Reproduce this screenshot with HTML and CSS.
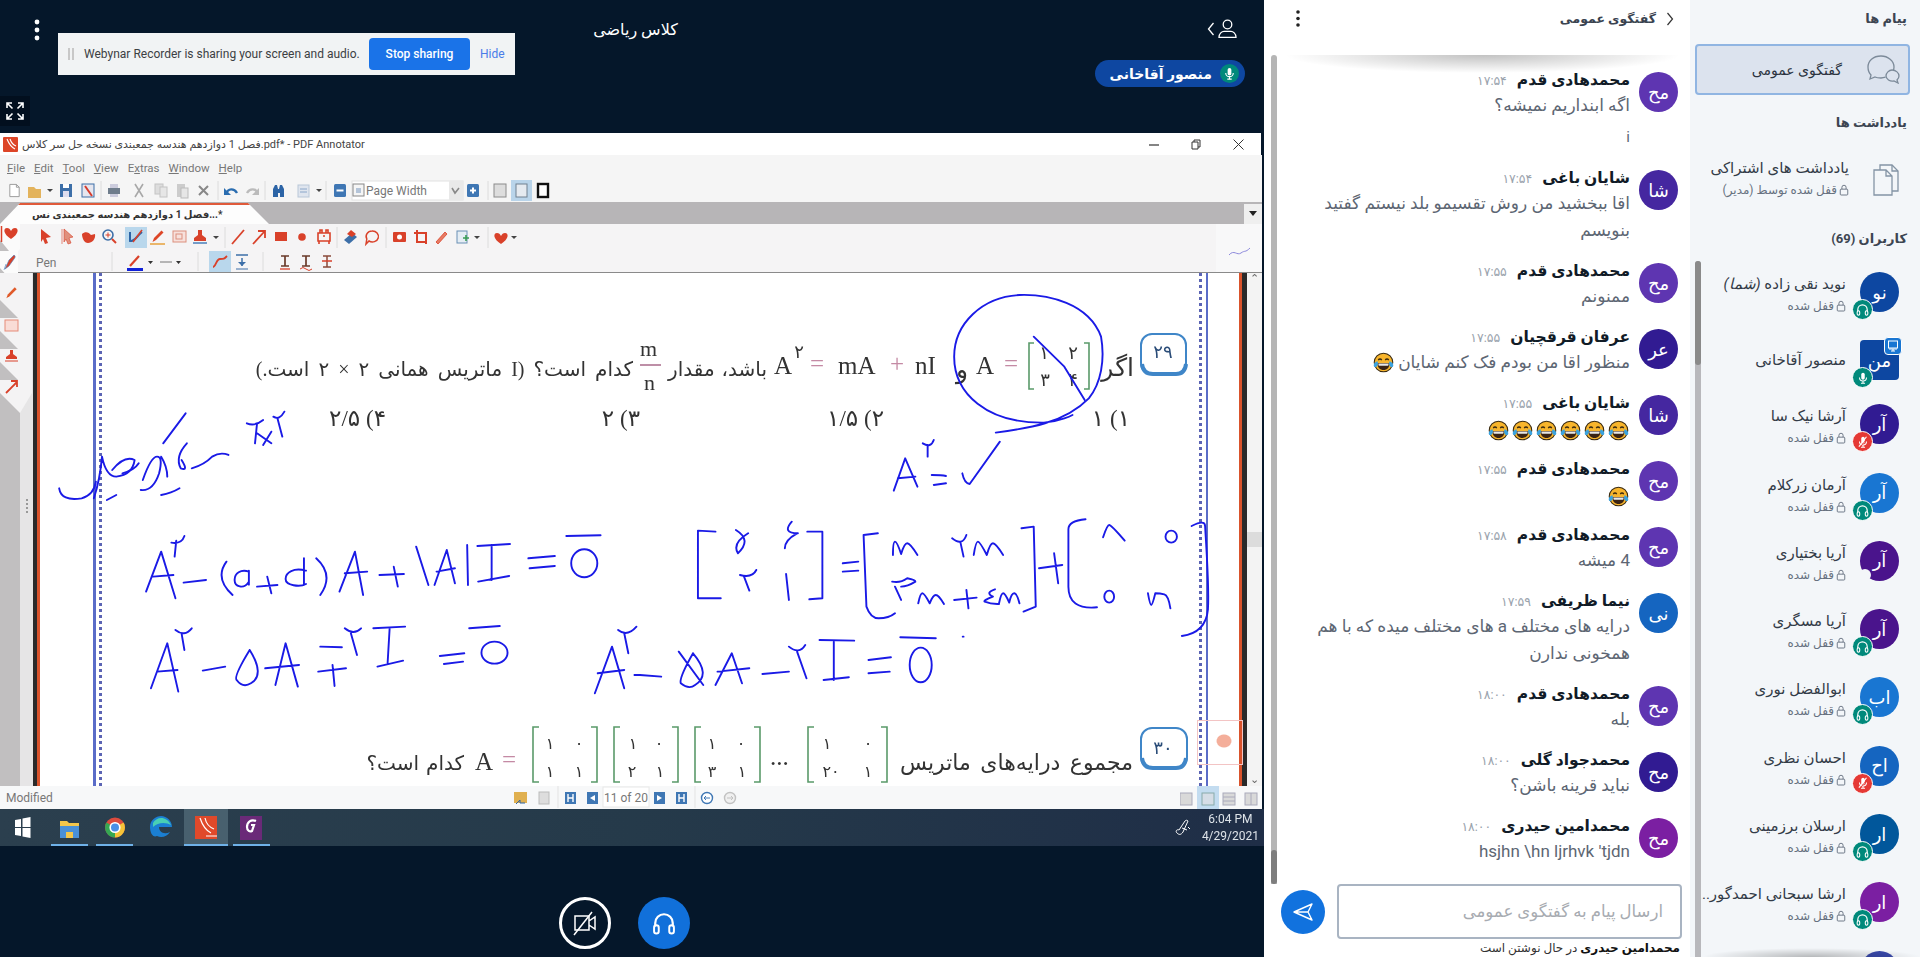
FILE: index.html
```html
<!DOCTYPE html>
<html lang="fa">
<head>
<meta charset="utf-8">
<title>کلاس ریاضی</title>
<link rel="stylesheet" href="styles.css">
</head>
<body>
<svg class="defs" width="0" height="0" aria-hidden="true">
  <symbol id="i-headset" viewBox="0 0 24 24"><path d="M4.500 15v-3a7.500 7.500 0 0 1 15 0v3" fill="none" stroke="currentColor" stroke-width="1.900"/><rect x="3.500" y="14" width="4" height="7" rx="2" fill="none" stroke="currentColor" stroke-width="1.700"/><rect x="16.500" y="14" width="4" height="7" rx="2" fill="none" stroke="currentColor" stroke-width="1.700"/></symbol>
  <symbol id="i-mic" viewBox="0 0 24 24"><rect x="9" y="3" width="6" height="12" rx="3" fill="currentColor"/><path d="M6 11a6 6 0 0 0 12 0M12 17v4M8.500 21h7" fill="none" stroke="currentColor" stroke-width="1.800"/></symbol>
  <symbol id="i-mute" viewBox="0 0 24 24"><rect x="9" y="3" width="6" height="12" rx="3" fill="currentColor"/><path d="M6 11a6 6 0 0 0 12 0M12 17v4M8.500 21h7" fill="none" stroke="currentColor" stroke-width="1.800"/><path d="M5 20 18 3" stroke="#fff" stroke-width="2"/><path d="M7 21 20 5" stroke="#e53935" stroke-width="1.400"/></symbol>
  <symbol id="i-lock" viewBox="0 0 12 14"><rect x="1.500" y="6" width="9" height="7" rx="1" fill="none" stroke="currentColor" stroke-width="1.100"/><path d="M3.500 6V3.800a2.500 2.500 0 0 1 5 0V6" fill="none" stroke="currentColor" stroke-width="1.100"/></symbol>
  <symbol id="i-emoji" viewBox="0 0 24 24"><circle cx="12" cy="12" r="10.600" fill="#f8b52c" stroke="#3a2a10" stroke-width="1.200"/><path d="M6 9.200c1-1.600 3-1.600 4 0M14 9.200c1-1.600 3-1.600 4 0" fill="none" stroke="#3a2a10" stroke-width="1.500"/><path d="M5 12.500h14c0 5-3 8-7 8s-7-3-7-8z" fill="#3a2415"/><path d="M6 13h12l-.6 2.600H6.600z" fill="#e8e8e8"/><path d="M.8 15c0-2 2.400-4 4.200-4.400 1.500 3-.1 6.600-2.200 6.600C1.600 17.200.8 16.400.8 15zM23.200 15c0-2-2.400-4-4.200-4.400-1.500 3 .1 6.600 2.200 6.600 1.200 0 2-.8 2-2.200z" fill="#3aa3e0"/></symbol>
  <symbol id="i-doc" viewBox="0 0 16 16"><path d="M3 1.500h7l3 3v10H3z" fill="#fff" stroke="currentColor"/><path d="M10 1.500v3h3" fill="none" stroke="currentColor"/></symbol>
  <symbol id="i-pen" viewBox="0 0 16 16"><path d="M2.500 14 4 10 11.500 2.500l2 2L6 12z" fill="currentColor"/></symbol>
</svg>

<main class="app">
  <section class="stage">
    <header class="stage-top">
      <svg class="kebab" width="6" height="22" viewBox="0 0 6 22"><circle cx="3" cy="3" r="2.400"/><circle cx="3" cy="11" r="2.400"/><circle cx="3" cy="19" r="2.400"/></svg>
      <h1 class="class-title">کلاس ریاضی</h1>
      <div class="user-toggle">
        <svg width="8" height="16" viewBox="0 0 8 16"><path d="M6.500 2 1.500 8l5 6" fill="none" stroke="#fff" stroke-width="1.300"/></svg>
        <svg width="19" height="19" viewBox="0 0 19 19"><circle cx="9.500" cy="5.500" r="4.300" fill="none" stroke="#fff" stroke-width="1.300"/><path d="M1 18.300c0-3.800 3-6 5-6h7c2 0 5 2.200 5 6z" fill="none" stroke="#fff" stroke-width="1.300"/></svg>
      </div>
    </header>
    <div class="talker-row">
      <div class="talker" dir="rtl">
        <span class="talker-mic"><svg width="15" height="15"><use href="#i-mic"/></svg></span>
        <span>منصور آقاخانی</span>
      </div>
    </div>
    <div class="fs-row">
      <button class="fs-btn" aria-label="fullscreen"><svg width="20" height="20" viewBox="0 0 20 20"><path d="M2 7V2h5M2 2l5.500 5.500M18 7V2h-5M18 2l-5.500 5.500M2 13v5h5M2 18l5.500-5.500M18 13v5h-5M18 18l-5.500-5.500" fill="none" stroke="#fff" stroke-width="1.600"/></svg></button>
    </div>

    <div class="share-bar">
      <span class="grip"></span>
      <span class="share-text">Webynar Recorder is sharing your screen and audio.</span>
      <button class="stop-btn">Stop sharing</button>
      <span class="hide-link">Hide</span>
    </div>

    <section class="shot">
      <div class="win-title">
        <svg width="15" height="15" viewBox="0 0 15 15"><rect width="15" height="15" rx="1" fill="#dd4527"/><path d="M4 2c2 5 4 8 8 10M7 2c1 3 3 6 6 7" stroke="#fff" stroke-width="1.100" fill="none"/></svg>
        <span class="win-name" dir="ltr">فصل 1 دوازدهم هندسه جمعبندی نسخه حل سر کلاس.pdf* - PDF Annotator</span>
        <div class="win-ctrls">
          <svg width="10" height="10" viewBox="0 0 10 10"><path d="M0 6h10" stroke="#333" stroke-width="1.200"/></svg>
          <svg width="10" height="11" viewBox="0 0 10 11"><path d="M1 3h6v7H1zM3 3V1h6v7H7" fill="none" stroke="#333"/></svg>
          <svg width="11" height="11" viewBox="0 0 11 11"><path d="M.5.5l10 10M10.500.5l-10 10" stroke="#333"/></svg>
        </div>
      </div>
      <nav class="win-menu">
        <span><u>F</u>ile</span><span><u>E</u>dit</span><span><u>T</u>ool</span><span><u>V</u>iew</span><span>E<u>x</u>tras</span><span><u>W</u>indow</span><span><u>H</u>elp</span>
      </nav>
      <svg class="tb" width="1264" height="22" viewBox="0 180 1264 22">
        <rect x="0" y="180" width="1262" height="22" fill="#f5f5f5"/>
        <g class="seps"><path d="M101 181v19M218 181v19M265 181v19M326 181v19M488 181v19"/></g>
        <use href="#i-doc" x="7" y="182" width="15" height="17" color="#999"/>
        <path d="M28 187h6l2 2h5v9H28z" fill="#e3b35c"/>
        <path d="M47 189h6l-3 3z" fill="#444"/>
        <rect x="60" y="184" width="12" height="13" fill="#3d6fa8"/><rect x="63" y="184" width="6" height="4" fill="#fff"/><rect x="63" y="191" width="6" height="6" fill="#dde"/>
        <rect x="82" y="184" width="12" height="13" fill="#e6e6ee" stroke="#3d6fa8"/><path d="M85 186l7 10" stroke="#d63b2b" stroke-width="2"/>
        <rect x="108" y="188" width="12" height="6" fill="#6f7d8c"/><rect x="110" y="184" width="8" height="4" fill="#ccd"/><rect x="110" y="194" width="8" height="3" fill="#ccd"/>
        <path d="M135 184l8 13M143 184l-8 13" stroke="#a8a8a8" stroke-width="1.600"/>
        <rect x="155" y="184" width="8" height="10" fill="#ddd" stroke="#c4c4c4"/><rect x="160" y="187" width="7" height="10" fill="#e6e6e6" stroke="#c4c4c4"/>
        <rect x="177" y="184" width="8" height="13" fill="#ccc"/><rect x="181" y="188" width="7" height="10" fill="#e6e6e6" stroke="#bbb"/>
        <path d="M199 186l9 9M208 186l-9 9" stroke="#888" stroke-width="2"/>
        <path d="M226 194c2-6 8-6 11-1" fill="none" stroke="#2a6db0" stroke-width="2.400"/><path d="M224 188v7h7z" fill="#2a6db0"/>
        <path d="M258 194c-2-6-8-6-11-1" fill="none" stroke="#bbb" stroke-width="2.400"/><path d="M259 188v7h-7z" fill="#bbb"/>
        <path d="M273 197v-8l2-4h2l1 4h1l1-4h2l2 4v8h-4v-4h-2v4z" fill="#2c64a6"/>
        <rect x="298" y="185" width="11" height="12" fill="#dfe5ee" stroke="#b9c7d8"/><path d="M300 189h7M300 192h7" stroke="#8aa6c9"/>
        <path d="M316 189h6l-3 3z" fill="#444"/>
        <rect x="334" y="184" width="12" height="13" rx="1.500" fill="#3f77b4"/><rect x="336.500" y="189.500" width="7" height="2" fill="#fff"/>
        <rect x="352" y="181" width="111" height="19" fill="#fff" stroke="#e2e2e2"/><rect x="449" y="181" width="14" height="19" fill="#e9e9e9"/>
        <path d="M452 188l3 5 4-5" stroke="#888" stroke-width="1.600" fill="none"/>
        <rect x="353" y="184" width="11" height="12" fill="#f5f5f5" stroke="#888"/><rect x="356" y="188" width="5" height="5" fill="#b4c4d8"/>
        <text class="tb-text" x="366" y="195">Page Width</text>
        <rect x="467" y="184" width="12" height="13" rx="1.500" fill="#3f77b4"/><path d="M470 190.500h6M473 187.500v6" stroke="#fff" stroke-width="2"/>
        <rect x="494" y="184" width="12" height="13" fill="#ddd" stroke="#8c8c8c"/>
        <rect x="511" y="180" width="21" height="21" fill="#b9d4ea"/><rect x="516" y="184" width="11" height="13" fill="#e5eaf0" stroke="#708090"/>
        <rect x="538" y="184" width="10" height="13" fill="#fff" stroke="#111" stroke-width="2.400"/>
      </svg>
      <div class="tab-band">
        <div class="doc-tab"><span dir="ltr">فصل 1 دوازدهم هندسه جمعبندی نس...*</span></div>
        <span class="tab-drop"></span>
      </div>
      <svg class="tb tools" width="1264" height="49" viewBox="0 224 1264 49">
        <rect x="0" y="224" width="1262" height="49" fill="#f5f4f5"/>
        <rect x="1216" y="224" width="46" height="48" fill="#f8f8f9"/>
        <path d="M0 272.500h1262" stroke="#8a8a8a"/>
        <path d="M0 224h20v25l-2 2v22H0z" fill="#fbfbfb"/>
        <path d="M0 240l9 11H0zM0 268l9 10H0z" fill="#c1bfc0"/>
        <path d="M1.500 226v16" stroke="#d9412a" stroke-width="1.500"/>
        <path d="M11 239c-8-5-8-11-4-11 2 0 3 1 4 3 1-2 2-3 4-3 4 0 4 6-4 11z" fill="#d9412a"/>
        <path d="M5 269l4-9 5-5c2 1 1 3 0 4l-5 7zM4 270l2-6" fill="#d9412a" stroke="#4a7fb8" stroke-width=".6"/>
        <rect x="125" y="227" width="22" height="21" fill="#b9d7ec"/>
        <rect x="209" y="251" width="22" height="21" fill="#b9d7ec"/>
        <g class="seps"><path d="M225 227v21M337 227v21M386 227v21M488 227v21M112 252v19M198 252v19M263 252v19"/></g>
        <g color="#dd4527">
          <path d="M41 229l10 8-5 1 2 5-3 1-2-5-2 3z" fill="#d9412a"/>
          <path d="M62 229v15M64 229l9 8-4 1 2 5-3 1-2-5-2 3z" fill="#e08f7c" stroke="#d9412a" stroke-width=".6"/>
          <path d="M82 234c3-3 7-2 9 1l4-1c1 5-3 9-7 9-4 0-6-5-6-9z" fill="#d9412a"/>
          <circle cx="108" cy="235" r="5" fill="none" stroke="#3d6fa8" stroke-width="1.600"/><path d="M112 239l4 4" stroke="#d9412a" stroke-width="2"/><path d="M105.500 235h5M108 232.500v5" stroke="#d9412a"/>
          <path d="M130 232v9c4 1 6-4 12-9" fill="none" stroke="#2c64a6" stroke-width="2"/><path d="M133 242l9-12" stroke="#d9412a" stroke-width="1.600"/>
          <use href="#i-pen" x="150" y="228" width="16" height="16"/><path d="M150 244h15" stroke="#e6a23c" stroke-width="1.500"/>
          <rect x="173" y="231" width="13" height="11" fill="#f7e1dc" stroke="#dc8f7e"/><rect x="176" y="234" width="6" height="5" fill="none" stroke="#dc8f7e"/>
          <path d="M198 230h4v5l4 3v3h-12v-3l4-3z" fill="#d9412a"/><path d="M193 243h14" stroke="#4a7fb8" stroke-width="1.500"/>
          <path d="M213 236h6l-3 3z" fill="#444"/>
          <path d="M232 244l12-14" stroke="#d9412a" stroke-width="1.800"/>
          <path d="M253 244l11-12M258 231h7v7" stroke="#d9412a" stroke-width="1.800" fill="none"/>
          <rect x="275" y="232" width="12" height="9" fill="#d9412a"/>
          <circle cx="302" cy="237" r="3.800" fill="#d9412a"/>
          <path d="M318 233h12v8h-12zM320 233v-3h2v3M326 233v-3h2v3M319 241v3M329 241v3M323 236h2" fill="none" stroke="#d9412a" stroke-width="1.600"/>
          <path d="M344 240l8-7 5 4-8 7z" fill="#3d6fa8"/><path d="M347 234l4-4 5 4-4 3z" fill="#d9412a"/>
          <path d="M372 231a6 5.500 0 1 1-3 10l-3 3 .8-5a6 5.500 0 0 1 5.200-8z" fill="none" stroke="#d9412a" stroke-width="1.500"/>
          <rect x="393" y="232" width="13" height="10" rx="1" fill="#d9412a"/><circle cx="399.500" cy="237" r="2.500" fill="#fff"/>
          <path d="M417 230v12h9M414 233h12v11" fill="none" stroke="#d9412a" stroke-width="2"/>
          <path d="M436 242l9-10 2 2-9 10z" fill="#e77c65" stroke="#d9412a" stroke-width=".8"/>
          <rect x="457" y="231" width="10" height="12" fill="#e5edf4" stroke="#6a8fb5"/><path d="M463 238h6M466 235v6" stroke="#3a9c56" stroke-width="1.600"/>
          <path d="M474 236h6l-3 3z" fill="#444"/>
          <path d="M501 244c-8-5-8-11-4-11 2 0 3 1 4 3 1-2 2-3 4-3 4 0 4 6-4 11z" fill="#d9412a"/>
          <path d="M511 236h6l-3 3z" fill="#444"/>
          <rect x="127" y="268" width="16" height="3" fill="#1020d8"/><path d="M130 266l9-10" stroke="#d9412a" stroke-width="2.200"/>
          <path d="M148 261h5l-2.500 3zM176 261h5l-2.500 3z" fill="#333"/><path d="M160 262h12" stroke="#777"/>
          <path d="M213 267c3 0 3-8 7-8s4 0 7-3" fill="none" stroke="#d9412a" stroke-width="1.800"/>
          <path d="M236 255h12M242 258v8" stroke="#3d6fa8" stroke-width="1.500"/><path d="M238 262h8l-4 4z" fill="#3d6fa8"/><path d="M236 269h12" stroke="#3d6fa8"/>
          <path d="M281 256h8M285 256v10M281 266h8" stroke="#6a3a2a" stroke-width="1.700"/><path d="M280 269h10" stroke="#d9412a" stroke-width="1.300"/>
          <path d="M302 256h8M306 256v10M302 266h8" stroke="#6a3a2a" stroke-width="1.700"/><path d="M300 269q3-3 6 0t6 0" stroke="#d9412a" fill="none"/>
          <path d="M323 256h8M327 256v11M323 267h8" stroke="#8a4a3a" stroke-width="1.500"/><path d="M322 261h10" stroke="#d9412a" stroke-width="1.500"/>
        </g>
        <text class="tb-text" x="36" y="267">Pen</text>
        <path d="M1229 255c5-6 8 1 12-2s4 0 9-5" fill="none" stroke="#8c88dc"/>
      </svg>

      <div class="page-row">
        <aside class="strip">
          <svg width="33" height="190" viewBox="0 273 33 190">
            <path d="M0 273h20l12 0v120l-12 20v50H0z" fill="#f4f3f4"/>
            <path d="M0 300l18 18H0zM0 331l18 18H0zM0 362l18 18H0zM0 393l20 20v50H0z" fill="#c1bfc0"/>
            <use href="#i-pen" x="4" y="285" width="15" height="15" color="#e05a2a"/>
            <rect x="5" y="320" width="13" height="11" fill="#f9dcd6" stroke="#e58b78"/>
            <path d="M10 350h3v4l4 3v2H6v-2l4-3z" fill="#d9412a"/><path d="M5 361h13" stroke="#d9412a"/>
            <path d="M6 393l11-11M11 381h6v6" stroke="#d9412a" stroke-width="1.800" fill="none"/>
          </svg>
          <span class="strip-grip"></span>
        </aside>
        <span class="rule-l"></span>
        <div class="paper">
          <span class="guide-l"></span>
          <span class="guide-r"></span>
          <span class="hand-box"></span>
        </div>
        <span class="rule-r"></span>
        <div class="vscroll">
          <span class="arrow">⌃</span>
          <span class="vthumb"></span>
          <span class="arrow">⌄</span>
        </div>
      </div>

      <div class="status">
        <span class="status-label">Modified</span>
        <svg class="status-nav" width="270" height="23" viewBox="510 786 270 23">
          <rect x="514" y="792" width="13" height="11" fill="#e0b050"/><path d="M516 804l4-4v3h5" stroke="#2c64a6" fill="none"/>
          <rect x="539" y="792" width="10" height="12" fill="#ddd" stroke="#bbb"/>
          <path d="M558 786v22M695 786v22" stroke="#e3e3e3"/>
          <rect x="565" y="792" width="11" height="12" fill="#3f77b4"/><path d="M568 794v8M573 794v8M568 798h5" stroke="#fff" stroke-width="1.400"/>
          <rect x="587" y="792" width="11" height="12" fill="#3f77b4"/><path d="M595 795v6l-5-3z" fill="#fff"/>
          <rect x="603" y="787" width="46" height="20" fill="#fff" stroke="#e8e8e8"/>
          <text class="tb-text" x="626" y="802" text-anchor="middle">11 of 20</text>
          <rect x="654" y="792" width="11" height="12" fill="#3f77b4"/><path d="M657 795v6l5-3z" fill="#fff"/>
          <rect x="676" y="792" width="11" height="12" fill="#3f77b4"/><path d="M679 794v8M684 794v8M679 798h5" stroke="#fff" stroke-width="1.400"/>
          <circle cx="707" cy="798" r="5.500" fill="#fff" stroke="#3f77b4" stroke-width="1.400"/><path d="M710 798h-6m2-2l-2 2 2 2" fill="none" stroke="#3f77b4"/>
          <circle cx="730" cy="798" r="5.500" fill="#f0f0f0" stroke="#c2c2c2" stroke-width="1.400"/><path d="M727 798h6m-2-2l2 2-2 2" fill="none" stroke="#c2c2c2"/>
        </svg>
        <svg class="status-views" width="78" height="23" viewBox="1180 786 78 23">
          <rect x="1197" y="786" width="22" height="23" fill="#c3dcf0"/>
          <rect x="1180" y="793" width="12" height="12" fill="#d9d9d9" stroke="#aab"/>
          <rect x="1202" y="793" width="12" height="12" fill="#d5dde6" stroke="#8aa"/>
          <rect x="1223" y="793" width="12" height="12" fill="#d9d9d9" stroke="#aab"/><path d="M1223 797h12M1223 801h12" stroke="#aab"/>
          <rect x="1245" y="793" width="12" height="12" fill="#d9d9d9" stroke="#aab"/><path d="M1251 793v12" stroke="#aab"/>
        </svg>
      </div>

      <div class="taskbar">
        <svg class="taskapps" width="280" height="37" viewBox="0 809 280 37">
          <path d="M15 820l6-1v8h-6zM22.500 818.500l8-1.500v10h-8zM15 828h6v8l-6-1zM22.500 828h8v10l-8-1.500z" fill="#fff"/>
          <rect x="184" y="809" width="44" height="37" fill="#48606e"/>
          <path d="M60 821h7l2 2h10v15H60z" fill="#f3c64a"/><rect x="60" y="826" width="19" height="12" fill="#4a90d6"/><rect x="66" y="832" width="7" height="6" fill="#f3c64a"/>
          <circle cx="115" cy="827.500" r="10" fill="#dd4b3e"/><path d="M115 827.500l-8.600-5a10 10 0 0 0 8.600 15z" fill="#35a853"/><path d="M115 827.500v10a10 10 0 0 0 8.600-15z" fill="#f6c338"/><circle cx="115" cy="827.500" r="4.800" fill="#4a8fe6" stroke="#fff" stroke-width="1.600"/>
          <path d="M150 827c0-7 6-11 11-11 6 0 11 5 11 11h-13c0 5 5 8 11 5-3 5-9 6-13 4-4 2-7-3-7-9z" fill="#1b7fd2"/><path d="M153 823c3-6 13-8 18 2-5-3-13-3-18 2z" fill="#49d0b4"/>
          <rect x="195" y="816" width="22" height="23" fill="#e0492a"/><path d="M200 818c2 6 5 12 11 15M205 818c1 5 4 9 9 11" stroke="#fff" stroke-width="1.200" fill="none"/><path d="M206 836h11" stroke="#fff"/>
          <rect x="240" y="816" width="22" height="24" fill="#6a2a78"/><path d="M256 821c-5-2-9 1-9 6 0 4 3 5 5 4l2-6h-3" fill="none" stroke="#fff" stroke-width="2.200"/>
          <g class="task-lines"><path d="M51 845h37M96 845h37M184 845h44M233 845h37"/></g>
        </svg>
        <div class="tray">
          <svg width="16" height="18" viewBox="0 0 16 18"><path d="M2 14c-2-2 0-4 2-3l6-9c1-1 2-1 3 0l-5 11c-2 3-4 3-6 1zM7 9l5 2M13 8l2 2" fill="none" stroke="#fff"/></svg>
          <div class="clock"><span>6:04 PM</span><span>4/29/2021</span></div>
        </div>
      </div>

      <svg class="canvas" width="1264" height="713" viewBox="0 133 1264 713">
        <!-- exam page text -->
        <g class="q-box"><rect x="1141" y="334" width="45" height="40" rx="11"/><path class="q-under" d="M1142 364q1 10 11 10h23q9 0 10-10"/><text class="q-num" x="1163" y="358">۲۹</text></g>
        <text class="ex" x="1134" y="376">اگر</text>
        <g class="mat"><path d="M1034 343h-5v46h5M1084 343h5v46h-5"/></g>
        <text class="ex dig" x="1044" y="359">۱</text><text class="ex dig" x="1073" y="359">۲</text>
        <text class="ex dig" x="1045" y="386">۳</text><text class="ex dig" x="1073" y="386">۴</text>
        <text class="lat end" x="994" y="374">A</text><text class="lat pink end" x="1018" y="372">=</text>
        <text class="ex" x="968" y="378">و</text>
        <text class="lat" x="915" y="374">nI</text><text class="lat pink" x="890" y="372">+</text>
        <text class="lat" x="838" y="374">mA</text><text class="lat pink" x="810" y="372">=</text>
        <text class="lat" x="774" y="374">A</text><text class="ex dig" x="799" y="358">۲</text>
        <text class="ex ex-m" x="767" y="376">باشد، مقدار</text>
        <text class="lat frac" x="640" y="356">m</text><path d="M640 365h21" stroke="#a86a8a" stroke-width="1.500"/><text class="lat frac" x="644" y="390">n</text>
        <text class="ex ex-l" x="633" y="376">کدام است؟ (I ماتریس همانی ۲ × ۲ است.)</text>
        <text class="ex ex-c" x="1130" y="426">۱) ۱</text>
        <text class="ex ex-c" x="884" y="426">۲) ۱/۵</text>
        <text class="ex ex-c" x="640" y="426">۳) ۲</text>
        <text class="ex ex-c" x="386" y="426">۴) ۲/۵</text>
        <g class="q-box"><rect x="1141" y="728" width="46" height="40" rx="11"/><path class="q-under" d="M1142 758q1 10 11 10h23q9 0 10-10"/><text class="q-num" x="1163" y="754">۳۰</text></g>
        <text class="ex ex-q" x="1133" y="770">مجموع درایه‌های ماتریس</text>
        <g class="mat">
          <path d="M814 727h-6v55h6M881 727h6v55h-6M701 727h-6v55h6M754 727h6v55h-6M620 727h-6v55h6M672 727h6v55h-6M539 727h-6v55h6M591 727h6v55h-6"/>
        </g>
        <text class="ex dig m30" x="827" y="749">۱</text><text class="ex dig m30" x="868" y="749">۰</text><text class="ex dig m30" x="831" y="777">۲۰</text><text class="ex dig m30" x="868" y="777">۱</text>
        <text class="ex dig m30" x="712" y="749">۱</text><text class="ex dig m30" x="741" y="749">۰</text><text class="ex dig m30" x="712" y="777">۳</text><text class="ex dig m30" x="742" y="777">۱</text>
        <text class="ex dig m30" x="633" y="749">۱</text><text class="ex dig m30" x="659" y="749">۰</text><text class="ex dig m30" x="632" y="777">۲</text><text class="ex dig m30" x="660" y="777">۱</text>
        <text class="ex dig m30" x="550" y="749">۱</text><text class="ex dig m30" x="579" y="749">۰</text><text class="ex dig m30" x="550" y="777">۱</text><text class="ex dig m30" x="579" y="777">۱</text>
        <text class="lat end" x="493" y="770">A</text><text class="lat pink end" x="516" y="768">=</text>
        <text class="lat" x="770" y="765">...</text>
        <text class="ex ex-m" x="464" y="770">کدام است؟</text>
        <!-- pen ink, left half -->
        <g class="ink" transform="translate(0 300) scale(.408 .3333)">
          <path d="M400 430 455 340"/>
          <path d="M605 370q20 10 40-10M630 370l-5 60M630 400l35 30M665 395l-20 40M670 350q15 12 27-15M680 355l12 55"/>
          <path d="M145 565q5 40 55 30q30-10 35-50M250 470q-5 70-20 125M250 470q10 60 35 60q40-5 45-50q-25-15-55 30M350 540q20-70 35-70t5 50q-15 55-45 50M458 430q-30 40-15 75q20 10 2-25M470 505q30-10 50-35q20-15 40-5M395 470q15 30 15 60"/>
          <path d="M262 600l23-15M395 585q25-5 45-20M300 520q30-10 40-30"/>
          <path d="M358 875 395 755 430 895M375 830 425 825M420 728q25 5 32-20M432 722 428 770M450 848 505 840"/>
          <path d="M555 785q-30 50 15 100M610 815c-20-8-35 5-35 25s22 30 35 5M610 812v42M630 860l50-5M655 830l10 50M750 812c-30-10-50 5-50 25s35 25 50 15M745 775v80M775 775q45 50 10 110"/>
          <path d="M832 875 870 755 890 885M845 820 900 815M930 825 990 822M965 800 975 860"/>
          <path d="M1020 740 1050 855M1065 855 1095 750 1115 850M1070 815 1115 805M1145 735 1147 855M1170 738 1250 732M1205 735 1205 840M1172 845 1248 828M1295 775 1360 768M1298 805 1360 798M1388 708 1472 706"/>
          <ellipse cx="1432" cy="790" rx="32" ry="42"/>
          <path d="M370 1165 410 1030 437 1175M385 1115 435 1110M430 990q22 22 40-5M445 1000 452 1050M497 1112 552 1100"/>
          <path d="M612 1050q-40 80-32 90q15 25 35 10q35-25-3-100M675 1155 700 1030 730 1160M650 1105 733 1095M785 1040 838 1042M780 1115 848 1105M815 1095 820 1158M845 985q22 22 40 0M860 1000 875 1065"/>
          <path d="M915 985 993 980M955 985 950 1090M925 1100 988 1082M1078 1068 1138 1060M1088 1092 1135 1085M1150 985 1225 978"/>
          <ellipse cx="1212" cy="1058" rx="32" ry="33"/>
          <path d="M1458 1180 1500 1040 1530 1165M1465 1120 1530 1110M1515 990q22 22 45-10M1530 1000 1540 1060M1555 1125 1568 1125"/>
        </g>
        <!-- pen ink, right half -->
        <g class="ink" transform="translate(640 300) scale(.408 .3333)">
          <path d="M0 1125 52 1130M130 1060q-35 75-30 90q20 20 35 5q40-30-5-95M95 1055 155 1155M185 1155 225 1060 250 1150M190 1115 268 1105M300 1122 365 1115M365 1040q25 25 40-5M385 1055 408 1135M440 1020 525 1022M475 1025 475 1140M450 1140 512 1132M560 1080 615 1072M560 1120 612 1115M638 1012 725 1015"/>
          <ellipse cx="688" cy="1095" rx="27" ry="52"/>
          <path d="M185 695 142 692 142 895 198 895M235 690q40 30 5 70q-15-30 25-60M372 665q-25 35 15 35M385 700q-30 20-30 45M410 695 447 695 447 895 415 898M245 825q30 10 40-15M255 830 268 872M358 822 365 900M497 790 535 785M497 815 535 812"/>
          <path d="M583 700 548 705 555 920q10 35 30 35q25 0 40-15"/>
          <path d="M620 765q0-40 5-40t15 37q8-32 15-32t25 35M765 715q25 25 35-10M785 725 793 770M818 765q5-40 10-40t22 40q8-35 15-35t25 35"/>
          <path d="M618 845q20 5 37-10q20 5 20 10q-20 15-35 15M625 860 640 900M682 910q5-30 10-30t18 30q8-25 15-25t20 27M770 900 825 893M800 870 805 925M870 868q-25 10-5 22q-25 12-20 15q15 8 35 7M880 910q5-30 10-30t15 28q5-28 12-28t13 30"/>
          <path d="M935 685 965 680 970 920 940 935M978 805 1035 795M1015 760 1025 850"/>
          <path d="M1092 658q-42 5-42 30V860q0 70 70 62M1135 712q10-37 15-37t38 47M1245 880q5 35 8 35t10-35q12 0 22 3t15 42M1352 678q33-20 33 0 10 190 7 250-5 70-64 80"/>
          <ellipse cx="1302" cy="710" rx="14" ry="18"/><ellipse cx="1150" cy="890" rx="12" ry="18"/>
          <path d="M791 1010h2"/>
          <path d="M622 572 650 475 680 560M632 535 675 530M693 430q20 15 27-10M705 435 705 470M715 525q25 0 35 3M720 555 750 550M790 520q5 30 18 32q35-60 74-127"/>
          <path d="M872 398C950 385 1040 370 1100 295C1130 250 1140 180 1130 110C1100 10 1000-18 930-15C840-10 770 70 770 170C770 280 850 370 990 368C1030 365 1060 345 1060 345"/>
          <path d="M965 110 1040 200 1090 300"/>
        </g>
      </svg>
    </section>

    <div class="controls">
      <button class="ctl ctl-off" aria-label="camera"><svg width="26" height="26" viewBox="0 0 26 26"><path d="M3 6h14v14H3zM17 11l6-4v12l-6-4" fill="none" stroke="#fff" stroke-width="1.500"/><path d="M2 25 20 2" stroke="#fff" stroke-width="1.500"/></svg></button>
      <button class="ctl ctl-on" aria-label="audio"><svg width="28" height="28"><use href="#i-headset"/></svg></button>
    </div>
  </section>

  <section class="chat" dir="rtl">
    <header class="chat-head">
      <svg width="8" height="14" viewBox="0 0 8 14"><path d="M1.500 1l5 6-5 6" fill="none" stroke="#333" stroke-width="1.200"/></svg>
      <h2>گفتگوی عمومی</h2>
      <svg class="chat-kebab" width="4" height="17" viewBox="0 0 4 17"><circle cx="2" cy="2" r="1.800"/><circle cx="2" cy="8.500" r="1.800"/><circle cx="2" cy="15" r="1.800"/></svg>
    </header>
    <div class="chat-body">
      <div class="chat-list">
        <span class="top-shade"></span>
        <article class="msg tall-first">
          <span class="av av-violet">مح</span>
          <div class="msg-main"><div class="who"><b>محمدهادی قدم</b><time>۱۷:۵۴</time></div><p>اگه ابنداریم نمیشه؟</p><p class="msg-extra">i</p></div>
        </article>
        <article class="msg">
          <span class="av av-indigo">شا</span>
          <div class="msg-main"><div class="who"><b>شایان باغی</b><time>۱۷:۵۴</time></div><p>اقا ببخشید من روش تقسیمو بلد نیستم گفتید<br>بنویسم</p></div>
        </article>
        <article class="msg">
          <span class="av av-violet">مح</span>
          <div class="msg-main"><div class="who"><b>محمدهادی قدم</b><time>۱۷:۵۵</time></div><p>ممنونم</p></div>
        </article>
        <article class="msg">
          <span class="av av-deep">عر</span>
          <div class="msg-main"><div class="who"><b>عرفان قرقچیان</b><time>۱۷:۵۵</time></div><p>منظور اقا من بودم فک کنم شایان <svg class="emo" width="21" height="21"><use href="#i-emoji"/></svg></p></div>
        </article>
        <article class="msg">
          <span class="av av-indigo">شا</span>
          <div class="msg-main"><div class="who"><b>شایان باغی</b><time>۱۷:۵۵</time></div><p class="emos"><svg class="emo" width="21" height="21"><use href="#i-emoji"/></svg><svg class="emo" width="21" height="21"><use href="#i-emoji"/></svg><svg class="emo" width="21" height="21"><use href="#i-emoji"/></svg><svg class="emo" width="21" height="21"><use href="#i-emoji"/></svg><svg class="emo" width="21" height="21"><use href="#i-emoji"/></svg><svg class="emo" width="21" height="21"><use href="#i-emoji"/></svg></p></div>
        </article>
        <article class="msg">
          <span class="av av-violet">مح</span>
          <div class="msg-main"><div class="who"><b>محمدهادی قدم</b><time>۱۷:۵۵</time></div><p class="emos"><svg class="emo" width="21" height="21"><use href="#i-emoji"/></svg></p></div>
        </article>
        <article class="msg">
          <span class="av av-violet">مح</span>
          <div class="msg-main"><div class="who"><b>محمدهادی قدم</b><time>۱۷:۵۸</time></div><p>4 میشه</p></div>
        </article>
        <article class="msg">
          <span class="av av-blue">نی</span>
          <div class="msg-main"><div class="who"><b>نیما ظریفی</b><time>۱۷:۵۹</time></div><p>درایه های مختلف a های مختلف میده که با هم<br>همخونی ندارن</p></div>
        </article>
        <article class="msg">
          <span class="av av-violet">مح</span>
          <div class="msg-main"><div class="who"><b>محمدهادی قدم</b><time>۱۸:۰۰</time></div><p>بله</p></div>
        </article>
        <article class="msg">
          <span class="av av-deep">مح</span>
          <div class="msg-main"><div class="who"><b>محمدجواد گلی</b><time>۱۸:۰۰</time></div><p>نباید قرینه باشن؟</p></div>
        </article>
        <article class="msg">
          <span class="av av-purple">مح</span>
          <div class="msg-main"><div class="who"><b>محمدامین حیدری</b><time>۱۸:۰۰</time></div><p class="latin-line">hsjhn \hn ljrhvk 'tjdn</p></div>
        </article>
      </div>
      <div class="chat-scroll"><span class="chat-thumb"></span></div>
    </div>
    <div class="composer">
      <div class="chat-input">ارسال پیام به گفتگوی عمومی</div>
      <button class="send" aria-label="send"><svg width="22" height="20" viewBox="0 0 22 20"><path d="M2 10 20 2l-4 8 4 8zM2 10h14" fill="none" stroke="#fff" stroke-width="1.400" stroke-linejoin="round"/></svg></button>
    </div>
    <div class="typing"><b>محمدامین حیدری</b> در حال نوشتن است</div>
  </section>

  <aside class="side" dir="rtl">
    <h3 class="side-h first">پیام ها</h3>
    <div class="pub-chat">
      <svg class="pub-ic" width="33" height="29" viewBox="0 0 33 29"><path d="M14 1C6 1 1 6 1 12c0 3 1 6 3 8l-1 4 5-2c2 1 4 1 6 1 1.500 0 3-.3 4.500-.8M27 12c0-6-6-11-13-11M27 12c0 1-.2 2-.5 3" fill="none" stroke="#7c8a99" stroke-width="1.300"/><path d="M25 15c4 0 7 3 7 6 0 2-1 3-2 4l1 3-4-2c-4 1-8-2-8-5 0-3 3-6 6-6z" fill="none" stroke="#7c8a99" stroke-width="1.300"/></svg>
      <span>گفتگوی عمومی</span>
    </div>
    <h3 class="side-h notes-h">یادداشت ها</h3>
    <div class="notes">
      <svg width="27" height="32" viewBox="0 0 27 32"><path d="M7 6V1h12l6 6v20h-6" fill="none" stroke="#8494a5" stroke-width="1.300"/><path d="M19 1v6h6M1 6h12l6 6v19H1zM13 6v6h6" fill="none" stroke="#8494a5" stroke-width="1.300"/></svg>
      <div class="notes-txt">
        <div class="u-name">یادداشت های اشتراکی</div>
        <div class="u-sub"><svg width="10" height="12"><use href="#i-lock"/></svg>قفل شده توسط (مدیر)</div>
      </div>
    </div>
    <h3 class="side-h users-h">کاربران (69)</h3>
    <div class="users">
      <ul class="user-list">
        <li class="user"><span class="av av-navy">نو<span class="badge b-ok"><svg width="15" height="15"><use href="#i-headset"/></svg></span></span><div><div class="u-name">نوید نقی زاده <i>(شما)</i></div><div class="u-sub"><svg width="10" height="12"><use href="#i-lock"/></svg>قفل شده</div></div></li>
        <li class="user user-mgr"><span class="av av-navy av-sq">من<span class="badge b-ok"><svg width="14" height="14"><use href="#i-mic"/></svg></span><span class="pres"><svg width="12" height="12" viewBox="0 0 12 12"><rect x="1.500" y="1" width="9" height="7" fill="none" stroke="#fff"/><path d="M2 9h8M6 9v2M4 11h4" stroke="#fff"/></svg></span></span><div><div class="u-name">منصور آقاخانی</div></div></li>
        <li class="user"><span class="av av-deep">آر<span class="badge b-off"><svg width="14" height="14"><use href="#i-mute"/></svg></span></span><div><div class="u-name">آرشا نیک سا</div><div class="u-sub"><svg width="10" height="12"><use href="#i-lock"/></svg>قفل شده</div></div></li>
        <li class="user"><span class="av av-sky">آر<span class="badge b-ok"><svg width="15" height="15"><use href="#i-headset"/></svg></span></span><div><div class="u-name">آرمان زرکلام</div><div class="u-sub"><svg width="10" height="12"><use href="#i-lock"/></svg>قفل شده</div></div></li>
        <li class="user"><span class="av av-grape">آر<span class="notch"></span></span><div><div class="u-name">آریا بختیاری</div><div class="u-sub"><svg width="10" height="12"><use href="#i-lock"/></svg>قفل شده</div></div></li>
        <li class="user"><span class="av av-grape">آر<span class="badge b-ok"><svg width="15" height="15"><use href="#i-headset"/></svg></span></span><div><div class="u-name">آریا مسگری</div><div class="u-sub"><svg width="10" height="12"><use href="#i-lock"/></svg>قفل شده</div></div></li>
        <li class="user"><span class="av av-sky">اب<span class="badge b-ok"><svg width="15" height="15"><use href="#i-headset"/></svg></span></span><div><div class="u-name">ابوالفضل نوری</div><div class="u-sub"><svg width="10" height="12"><use href="#i-lock"/></svg>قفل شده</div></div></li>
        <li class="user"><span class="av av-blue">اح<span class="badge b-off"><svg width="14" height="14"><use href="#i-mute"/></svg></span></span><div><div class="u-name">احسان نظری</div><div class="u-sub"><svg width="10" height="12"><use href="#i-lock"/></svg>قفل شده</div></div></li>
        <li class="user"><span class="av av-ocean">ار<span class="badge b-ok"><svg width="15" height="15"><use href="#i-headset"/></svg></span></span><div><div class="u-name">ارسلان برزمینی</div><div class="u-sub"><svg width="10" height="12"><use href="#i-lock"/></svg>قفل شده</div></div></li>
        <li class="user"><span class="av av-purple">ار<span class="badge b-ok"><svg width="15" height="15"><use href="#i-headset"/></svg></span></span><div><div class="u-name">ارشا سبحانی احمدگور...</div><div class="u-sub"><svg width="10" height="12"><use href="#i-lock"/></svg>قفل شده</div></div></li>
        <li class="user"><span class="av av-royal"></span></li>
      </ul>
      <div class="side-scroll"><span class="side-thumb"></span></div>
      <span class="bottom-shade"></span>
    </div>
  </aside>
</main>
</body>
</html>
```

FILE: styles.css
```css
* { box-sizing: border-box; }
html, body { margin: 0; height: 100%; overflow: hidden; }
body { font-family: Roboto, "DejaVu Sans", sans-serif; background: #fff; }
.defs { position: absolute; }
.app { display: flex; width: 1920px; height: 957px; overflow: hidden; }
h1, h2, h3, p, ul { margin: 0; padding: 0; }
button { border: 0; padding: 0; font: inherit; }

/* Stage */
.stage { position: relative; width: 1264px; height: 957px; background: #05172a; color: #fff; display: flex; flex-direction: column; flex: none; }
.stage-top { height: 60px; display: grid; grid-template-columns: 1fr auto 1fr; align-items: start; padding: 19px 27px 0 34px; }
.kebab { fill: #fff; }
.class-title { font-size: 16px; font-weight: 400; line-height: 22px; }
.user-toggle { justify-self: end; display: flex; gap: 3px; align-items: center; }
.talker-row { height: 36px; display: flex; justify-content: flex-end; padding-right: 19px; }
.talker { height: 27px; width: 150px; border-radius: 14px; background: #0e47a1; display: flex; align-items: center; gap: 8px; padding-right: 6px; font-size: 14px; font-weight: 700; }
.talker-mic { width: 19px; height: 19px; border-radius: 50%; background: #00897b; display: grid; place-items: center; color: #fff; }
.fs-row { height: 37px; }
.fs-btn { width: 30px; height: 30px; background: #020f1e; display: grid; place-items: center; }

.share-bar { position: absolute; left: 58px; top: 33px; width: 457px; height: 42px; background: #f1f3f4; display: flex; align-items: center; color: #3c4043; font: 12px Roboto, sans-serif; }
.grip { width: 6px; height: 12px; margin: 0 10px; border-left: 2px solid #c8c8c8; border-right: 2px solid #c8c8c8; }
.share-text { width: 286px; white-space: nowrap; }
.stop-btn { width: 101px; height: 32px; background: #1a73e8; color: #fff; border-radius: 4px; font-weight: 500; font-size: 12px; margin-left: -1px; }
.hide-link { color: #4a7ce8; margin-left: 10px; }

/* Captured window */
.shot { position: relative; width: 1264px; height: 713px; flex: none; display: flex; flex-direction: column; filter: blur(.35px); color: #333; }
.win-title { width: 1261px; height: 22px; background: #fff; display: flex; align-items: center; padding-left: 3px; gap: 4px; font-size: 12px; }
.win-name { font-size: 11px; color: #444; white-space: nowrap; }
.win-ctrls { margin-left: auto; display: flex; align-items: center; gap: 32px; padding-right: 17px; }
.win-menu { height: 25px; background: #f5f5f5; display: flex; align-items: center; width: 1262px; padding-left: 7px; gap: 9px; font-size: 11.500px; color: #777; }
.tb { display: block; flex: none; }
.seps path { stroke: #dcdcdc; fill: none; }
.tb-text { font: 12px Roboto, sans-serif; fill: #777; }
.tab-band { height: 22px; width: 1262px; background: #b7b5b7; display: flex; justify-content: space-between; align-items: flex-end; }
.doc-tab { width: 269px; height: 21px; padding-left: 32px; background: #fdfdfd; border-top: 2px solid #e05a3a; clip-path: polygon(20px 0, 248px 0, 100% 100%, 0 100%); font-size: 10px; font-weight: 700; color: #333; display: flex; align-items: center; white-space: nowrap; }
.tab-drop { width: 18px; height: 20px; background: #efefef; position: relative; }
.tab-drop::after { content: ""; position: absolute; left: 5px; top: 7px; border: 4px solid transparent; border-top: 5px solid #222; }
.page-row { height: 513px; width: 1262px; display: flex; }
.strip { width: 33px; background: linear-gradient(to right, #c1bfc0 20px, #e6e5e6 20px); position: relative; display: flex; flex-direction: column; }
.strip-grip { position: absolute; left: 26px; top: 226px; height: 14px; border-left: 2px dotted #999; }
.rule-l { width: 7px; background: linear-gradient(to right, #2a2a2a 4px, #d9532c 4px); }
.rule-r { width: 8px; background: linear-gradient(to right, #d9532c 3px, #2a2a2a 3px); }
.paper { flex: 1; background: #fff; position: relative; }
.guide-l { position: absolute; left: 53px; top: 0; bottom: 0; width: 9px; border-left: 3px solid #5a6cc8; }
.guide-l::after { content: ""; position: absolute; left: 3px; top: 0; bottom: 0; border-left: 3px dotted #5b64b4; }
.guide-r { position: absolute; left: 1159px; top: 0; bottom: 0; width: 9px; border-right: 2px solid #5a6cc8; border-left: 3px dotted #5b64b4; }
.hand-box { position: absolute; left: 1157px; top: 447px; width: 46px; height: 45px; border: 1px solid #f3c4c4; background: radial-gradient(ellipse 8px 7px at 26px 20px, #f4ae9a 85%, rgba(255,255,255,0) 100%); }
.vscroll { width: 15px; background: #f3f3f3; display: flex; flex-direction: column; align-items: center; justify-content: space-between; color: #666; font-size: 11px; line-height: 12px; position: relative; }
.vthumb { position: absolute; top: 259px; left: 0; width: 15px; height: 15px; background: #dcdcdc; }
.status { height: 23px; width: 1262px; background: #f7f8f9; display: flex; align-items: center; font-size: 12px; color: #777; padding-left: 6px; }
.status-label { width: 504px; }
.status-views { margin-left: auto; margin-right: 4px; }
.taskbar { height: 37px; width: 1264px; background: linear-gradient(to right, #2b3f4e, #253a4a 50%, #1f2e47); display: flex; justify-content: space-between; align-items: center; }
.task-lines path { stroke: #6fb1e8; stroke-width: 2; fill: none; }
.tray { display: flex; align-items: center; gap: 11px; padding-right: 5px; }
.clock { display: flex; flex-direction: column; align-items: center; font-size: 12px; line-height: 17px; color: #dde3e8; }
.canvas { position: absolute; left: 0; top: 0; pointer-events: none; }
.ex { font-family: "Liberation Serif", "DejaVu Sans", serif; font-size: 25px; fill: #333; text-anchor: start; direction: rtl; }
.ex-l { font-size: 20px; word-spacing: 4px; }
.ex-q { font-size: 22px; word-spacing: 4px; }
.ex-m { word-spacing: 2px; font-size: 20px; }
.ex-c { font-size: 23px; }
.dig { text-anchor: middle; font-size: 18px; direction: ltr; }
.m30 { font-size: 16px; }
.lat { font-family: "Liberation Serif", serif; font-size: 25px; fill: #333; }
.lat.end { text-anchor: end; }
.pink { fill: #c48aa4; }
.frac { font-size: 22px; }
.q-box rect { fill: #fff; stroke: #3f86c8; stroke-width: 2; }
.q-under { fill: none; stroke: #3f86c8; stroke-width: 4; }
.q-num { font-size: 18px; fill: #2a4c78; text-anchor: middle; font-family: "DejaVu Sans", sans-serif; }
.mat path { fill: none; stroke: #5a9a6a; stroke-width: 1.600; }
.ink path, .ink ellipse { fill: none; stroke: #1a1ae6; stroke-width: 1.900; vector-effect: non-scaling-stroke; stroke-linecap: round; stroke-linejoin: round; }
.controls { flex: 1; display: flex; justify-content: center; gap: 27px; padding: 51px 15px 0 0; }
.ctl { width: 52px; height: 52px; border-radius: 50%; display: grid; place-items: center; color: #fff; }
.ctl-off { background: transparent; border: 3px solid #fff; }
.ctl-on { background: #1170da; }

/* Shared avatar */
.av { flex: none; width: 39px; height: 40px; border-radius: 50%; color: #fff; display: grid; place-items: center; font-size: 18px; position: relative; }
.av-violet { background: #5e35b1; }
.av-indigo { background: #4527a0; }
.av-deep { background: #311b92; }
.av-blue { background: #1565c0; }
.av-purple { background: #7b1fa2; }
.av-navy { background: #0d47a1; }
.av-sky { background: #1976d2; }
.av-grape { background: #4a148c; }
.av-ocean { background: #01579b; }
.av-royal { background: #3949ab; }
.av-sq { border-radius: 4px; }

/* Chat */
.chat { width: 426px; flex: none; height: 957px; background: #fff; display: flex; flex-direction: column; }
.chat-head { height: 55px; display: flex; align-items: center; gap: 10px; padding: 0 16px 18px 0; }
.chat-head h2 { font-size: 12.500px; font-weight: 700; color: #3a4350; }
.chat-kebab { margin-right: auto; margin-left: 32px; fill: #222; }
.chat-body { height: 829px; display: flex; }
.chat-list { flex: 1; padding: 17px 12px 0 0; overflow: hidden; position: relative; }
.top-shade { position: absolute; left: 8px; right: 10px; top: 0; height: 18px; background: radial-gradient(ellipse 50% 100% at 50% 0, rgba(0,0,0,.24), rgba(0,0,0,0)); }
.msg { display: flex; gap: 9px; padding-bottom: 19px; }
.msg-main { flex: 1; color: #5d6673; font-size: 17px; line-height: 27px; }
.who { display: flex; align-items: center; gap: 10px; height: 16px; margin-bottom: 4px; }
.who b { color: #111b27; font-size: 15.500px; }
.who time { font-size: 12.500px; color: #9aa3ad; }
.msg p { white-space: nowrap; }
.msg.tall-first { padding-bottom: 14px; }
.msg-extra { line-height: 37px; font-size: 15px; }
.latin-line { font-size: 17px; }
.emo { vertical-align: -5px; }
.emos { display: flex; gap: 3px; padding-top: 3px; height: 27px; align-items: center; padding-right: 1px; }
.chat-scroll { width: 6px; margin-left: 7px; background: #b5b5b5; border-radius: 4px 4px 0 0; display: flex; flex-direction: column; justify-content: flex-end; }
.chat-thumb { height: 34px; border-radius: 3px; background: #7e7e7e; }
.composer { height: 55px; display: flex; align-items: center; padding: 0 8px 0 17px; }
.chat-input { flex: 1; height: 55px; border: 2px solid #a9b4c2; border-radius: 4px; padding-right: 17px; display: flex; align-items: center; color: #a7abb1; font-size: 16.500px; }
.send { width: 44px; height: 44px; border-radius: 50%; background: #1172de; margin-right: 12px; display: grid; place-items: center; }
.typing { padding-right: 10px; font-size: 12px; line-height: 18px; color: #333; }
.typing b { color: #111; }

/* Side */
.side { width: 230px; flex: none; height: 957px; background: #f3f6f9; display: flex; flex-direction: column; color: #2b3340; }
.side-h { font-size: 13px; font-weight: 700; color: #3c4552; padding-right: 13px; line-height: 20px; }
.side-h.first { padding-top: 9px; }
.pub-chat { height: 51px; margin: 15px 10px 0 5px; border: 2px solid #90b5e2; border-radius: 4px; background: #dce3ee; display: flex; align-items: center; gap: 25px; padding-right: 8px; font-size: 14px; }
.side-h.notes-h { margin-top: 18px; }
.notes { height: 76px; margin-top: 6px; display: flex; align-items: flex-start; padding: 17px 20px 0 0; gap: 24px; }
.notes > svg { margin-top: 8px; }
.u-name { font-size: 15px; line-height: 24px; color: #333c48; white-space: nowrap; }
.u-name i { font-style: italic; }
.u-sub { font-size: 12px; line-height: 20px; color: #667180; display: flex; align-items: center; gap: 2px; white-space: nowrap; }
.side-h.users-h { margin-top: 14px; margin-bottom: 12px; }
.users { flex: 1; position: relative; display: flex; overflow: hidden; min-height: 0; }
.user-list { flex: 1; list-style: none; padding: 11px 0 0 0; order: 1; min-width: 0; }
.user { height: 68.300px; display: flex; gap: 14px; padding-right: 21px; margin-left: 6px; }
.user-mgr { height: 64px; align-items: flex-start; }
.user-mgr .u-name { line-height: 40px; }
.user > div { min-width: 0; }
.badge { position: absolute; left: -8px; bottom: -8px; width: 21px; height: 21px; border-radius: 50%; display: grid; place-items: center; border: 1px solid #fff; color: #fff; }
.b-ok { background: #00897b; }
.b-off { background: #e53935; }
.notch { position: absolute; left: -1px; bottom: 0; width: 12px; height: 12px; border-radius: 50%; background: #f3f6f9; }
.pres { position: absolute; right: -3px; top: -3px; width: 18px; height: 18px; border-radius: 4px; background: #1976d2; border: 1px solid #fff; display: grid; place-items: center; }
.side-scroll { order: 2; width: 6px; margin-left: 5px; flex: none; background: #b8b8bc; border-radius: 3px 3px 0 0; }
.side-thumb { display: block; height: 104px; background: #8a8a8a; border-radius: 3px; }
.bottom-shade { position: absolute; left: 12px; right: 0; bottom: 0; height: 9px; background: radial-gradient(ellipse 50% 100% at 50% 100%, rgba(0,0,0,.25), rgba(0,0,0,0)); }
```
